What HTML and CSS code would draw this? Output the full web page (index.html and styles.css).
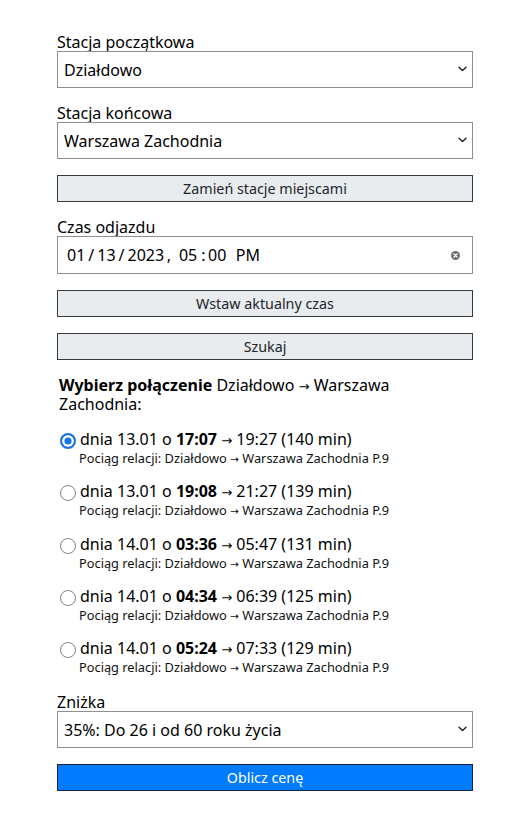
FILE: index.html
```html
<!DOCTYPE html>
<html lang="pl">
<head>
<meta charset="utf-8">
<title>Kalkulator ceny biletu</title>
<link rel="stylesheet" href="styles.css">
</head>
<body>
<main class="app">
  <label class="label" for="from">Stacja początkowa</label>
  <div class="select-wrap">
    <select id="from" class="control"><option>Działdowo</option></select>
    <svg class="chevron" width="9" height="6" viewBox="0 0 9 6" aria-hidden="true"><path d="M1 1.3 L4.5 4.5 L8 1.3" fill="none" stroke="#1f1f1f" stroke-width="1.4" stroke-linecap="round" stroke-linejoin="round"/></svg>
  </div>

  <label class="label" for="to">Stacja końcowa</label>
  <div class="select-wrap">
    <select id="to" class="control"><option>Warszawa Zachodnia</option></select>
    <svg class="chevron" width="9" height="6" viewBox="0 0 9 6" aria-hidden="true"><path d="M1 1.3 L4.5 4.5 L8 1.3" fill="none" stroke="#1f1f1f" stroke-width="1.4" stroke-linecap="round" stroke-linejoin="round"/></svg>
  </div>

  <button class="btn" type="button">Zamień stacje miejscami</button>

  <label class="label" for="time">Czas odjazdu</label>
  <div class="datetime" id="time" role="textbox">
    <span class="dt f1">01</span><span class="dt s1">/</span><span class="dt f2">13</span><span class="dt s2">/</span><span class="dt f3">2023</span><span class="dt s3">,</span><span class="dt f4">05</span><span class="dt s4">:</span><span class="dt f5">00</span><span class="dt f6">PM</span>
    <svg class="clear" width="9" height="9" viewBox="0 0 9 9" aria-hidden="true"><circle cx="4.5" cy="4.5" r="4.5" fill="#6f6f6f"/><path d="M2.9 2.9 L6.1 6.1 M6.1 2.9 L2.9 6.1" stroke="#fff" stroke-width="1.3" stroke-linecap="round"/></svg>
  </div>

  <button class="btn" type="button">Wstaw aktualny czas</button>
  <button class="btn" type="button">Szukaj</button>

  <p class="heading"><b>Wybierz połączenie</b> Działdowo <span class="arr">→</span> Warszawa Zachodnia:</p>

  <ul class="conns">
    <li class="conn">
      <label class="conn-main"><span class="radio checked" role="radio" aria-checked="true"></span><span>dnia 13.01 o <b>17:07</b> <span class="arr">→</span> 19:27 (140 min)</span></label>
      <div class="conn-sub">Pociąg relacji: Działdowo <span class="arr">→</span> Warszawa Zachodnia P.9</div>
    </li>
    <li class="conn">
      <label class="conn-main"><span class="radio" role="radio" aria-checked="false"></span><span>dnia 13.01 o <b>19:08</b> <span class="arr">→</span> 21:27 (139 min)</span></label>
      <div class="conn-sub">Pociąg relacji: Działdowo <span class="arr">→</span> Warszawa Zachodnia P.9</div>
    </li>
    <li class="conn">
      <label class="conn-main"><span class="radio" role="radio" aria-checked="false"></span><span>dnia 14.01 o <b>03:36</b> <span class="arr">→</span> 05:47 (131 min)</span></label>
      <div class="conn-sub">Pociąg relacji: Działdowo <span class="arr">→</span> Warszawa Zachodnia P.9</div>
    </li>
    <li class="conn">
      <label class="conn-main"><span class="radio" role="radio" aria-checked="false"></span><span>dnia 14.01 o <b>04:34</b> <span class="arr">→</span> 06:39 (125 min)</span></label>
      <div class="conn-sub">Pociąg relacji: Działdowo <span class="arr">→</span> Warszawa Zachodnia P.9</div>
    </li>
    <li class="conn">
      <label class="conn-main"><span class="radio" role="radio" aria-checked="false"></span><span>dnia 14.01 o <b>05:24</b> <span class="arr">→</span> 07:33 (129 min)</span></label>
      <div class="conn-sub">Pociąg relacji: Działdowo <span class="arr">→</span> Warszawa Zachodnia P.9</div>
    </li>
  </ul>

  <label class="label label-discount" for="disc">Zniżka</label>
  <div class="select-wrap">
    <select id="disc" class="control"><option>35%: Do 26 i od 60 roku życia</option></select>
    <svg class="chevron" width="9" height="6" viewBox="0 0 9 6" aria-hidden="true"><path d="M1 1.3 L4.5 4.5 L8 1.3" fill="none" stroke="#1f1f1f" stroke-width="1.4" stroke-linecap="round" stroke-linejoin="round"/></svg>
  </div>
  <button class="btn btn-primary" type="button">Oblicz cenę</button>
</main>
</body>
</html>
```

FILE: styles.css
```css
html, body {
  margin: 0;
  padding: 0;
  background: #fff;
}
body {
  font-family: "Noto Sans", "Open Sans", sans-serif;
  font-size: 16px;
  color: #000;
}
.app {
  width: 416px;
  margin: 0 auto;
  padding-top: 33px;
  display: flex;
  flex-direction: column;
}
.label {
  display: block;
  font-size: 16px;
  line-height: 18px;
}
.select-wrap {
  position: relative;
  margin-bottom: 16px;
}
.control {
  display: block;
  box-sizing: border-box;
  height: 37px;
  width: 100%;
  margin: 0;
  font-family: "Noto Sans", "Open Sans", sans-serif;
  font-size: 16px;
  color: #000;
  background: #fff;
  border: 1px solid #8f8f8f;
  border-radius: 0;
  padding: 0 24px 0 6px;
  appearance: none;
  -webkit-appearance: none;
  outline: none;
}
.chevron {
  position: absolute;
  right: 6px;
  top: 15px;
  pointer-events: none;
}
.datetime {
  position: relative;
  box-sizing: border-box;
  height: 38px;
  margin-bottom: 16px;
  border: 1px solid #8f8f8f;
  padding: 0 0 0 9px;
  display: flex;
  align-items: center;
  font-size: 16px;
  color: #000;
  white-space: pre;
}
.dt { display: inline-block; }
.s1, .s2 { margin-left: 3px; }
.f2, .f3 { margin-left: 3px; }
.s3 { margin-left: 2.5px; }
.f4 { margin-left: 8px; }
.s4 { margin-left: 4px; }
.f5 { margin-left: 2.5px; }
.f6 { margin-left: 9.5px; }
.clear {
  position: absolute;
  right: 12px;
  top: 13.5px;
}
.btn {
  display: block;
  box-sizing: border-box;
  height: 27px;
  width: 100%;
  margin: 0 0 16px;
  font-family: "Noto Sans", "Open Sans", sans-serif;
  font-size: 14.3px;
  color: #212529;
  background: #e9ecef;
  border: 1px solid #343a40;
  border-radius: 0;
  padding: 0;
}
.heading {
  margin: 0 0 15px;
  padding: 0 2px;
  font-size: 16px;
  line-height: 19px;
}
.arr {
  font-family: "DejaVu Sans", sans-serif;
  font-size: 0.82em;
  line-height: 0;
}
.conns {
  list-style: none;
  margin: 0;
  padding: 0;
}
.conn {
  margin-bottom: 14.25px;
}
.conn:last-child {
  margin-bottom: 0;
}
.conn-main {
  display: flex;
  align-items: flex-start;
  height: 21px;
  font-size: 16px;
  line-height: 21px;
  white-space: nowrap;
}
.radio {
  display: block;
  box-sizing: border-box;
  flex: none;
  width: 16px;
  height: 16px;
  margin: 4px 4px 0 3px;
  border: 1.8px solid #84828f;
  border-radius: 50%;
  background: #fff;
}
.radio.checked {
  border: 2.2px solid #1a73e8;
  background: #1a73e8;
  box-shadow: inset 0 0 0 2.4px #fff;
}
.conn-sub {
  height: 17px;
  padding-left: 22px;
  font-size: 12.8px;
  line-height: 17px;
  color: #111;
}
.label-discount {
  margin-top: 17px;
}
.btn-primary {
  background: #007bff;
  color: #fff;
  border-color: #1b2533;
}
```
